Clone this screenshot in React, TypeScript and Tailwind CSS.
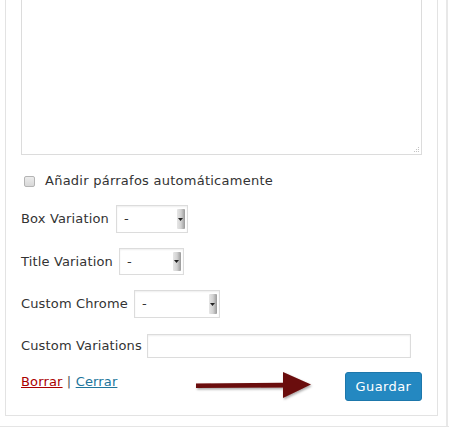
function FakeSelect({ width }: { width: string }) {
  return (
    <div className={`${width} h-full flex items-stretch border border-[#dcdcdc] bg-white shadow-[inset_0_1px_2px_rgba(0,0,0,0.07)]`}>
      <span className="flex-1 pl-[7px] flex items-center text-[13px] text-[#333]">-</span>
      <div className="my-[3px] mr-[2px] w-[8px] rounded-[1px] bg-gradient-to-r from-[#e6e6e6] via-[#d2d2d2] to-[#9a9a9a] flex items-center justify-center">
        <svg width="5" height="3" viewBox="0 0 5 3">
          <path d="M0 0 L5 0 L2.5 3 Z" fill="#222" />
        </svg>
      </div>
    </div>
  );
}

function App() {
  return (
    <div className="w-[449px] h-[427px] bg-white overflow-hidden relative" style={{ fontFamily: '"DejaVu Sans", Verdana, sans-serif' }}>
      <div className="flex h-[426px]">
        <div className="ml-[5px] w-[433px] h-[416px] border border-t-0 border-[#e3e3e3] pl-[15px] text-[13px] text-[#333] tracking-[0.15px]">
          {/* textarea */}
          <div className="w-[401px] h-[155px] border border-t-0 border-[#dcdcdc] relative">
            <svg className="absolute right-[1px] bottom-[1px]" width="8" height="8" viewBox="0 0 8 8">
              <circle cx="6.5" cy="2.5" r="0.6" fill="#bbb" />
              <circle cx="4.5" cy="4.5" r="0.6" fill="#bbb" />
              <circle cx="6.5" cy="4.5" r="0.6" fill="#bbb" />
              <circle cx="2.5" cy="6.5" r="0.6" fill="#bbb" />
              <circle cx="4.5" cy="6.5" r="0.6" fill="#bbb" />
              <circle cx="6.5" cy="6.5" r="0.6" fill="#bbb" />
            </svg>
          </div>

          <div className="mt-[17px] h-[18px] flex items-center">
            <div className="ml-[3px] w-[11px] h-[11px] rounded-[2px] border border-[#b4b4b4] bg-gradient-to-b from-[#ececec] to-[#d8d8d8]" />
            <span className="ml-[10px] tracking-[0.25px]">Añadir párrafos automáticamente</span>
          </div>

          <div className="mt-[15px] h-[28px] flex items-center gap-[7px]">
            <span>Box Variation</span>
            <FakeSelect width="w-[72px]" />
          </div>

          <div className="mt-[15px] h-[27px] flex items-center gap-[6px]">
            <span>Title Variation</span>
            <FakeSelect width="w-[65px]" />
          </div>

          <div className="mt-[15px] h-[28px] flex items-center gap-[6px]">
            <span>Custom Chrome</span>
            <FakeSelect width="w-[86px]" />
          </div>

          <div className="mt-[16px] h-[24px] flex items-center gap-[5px]">
            <span>Custom Variations</span>
            <div className="w-[264px] h-full border border-[#dcdcdc] bg-white shadow-[inset_0_1px_2px_rgba(0,0,0,0.07)]" />
          </div>

          <div className="mt-[14px] h-[29px] flex items-start justify-between pr-[15px] relative">
            <div className="pt-[1px] leading-[18px]">
              <a className="text-[#a00] underline">Borrar</a>
              <span className="text-[#555]"> | </span>
              <a className="text-[#21759b] underline">Cerrar</a>
            </div>
            <svg className="absolute left-[172px] top-[-3px]" width="124" height="34" viewBox="0 0 124 34">
              <defs>
                <filter id="sh" x="-10%" y="-30%" width="120%" height="160%">
                  <feDropShadow dx="1" dy="1.5" stdDeviation="1.2" floodColor="#000" floodOpacity="0.35" />
                </filter>
              </defs>
              <path d="M3 14.5 L90 13.8 L90 3 L118 15.5 L90 29 L90 18.5 L3 19 Z" fill="#6b0b0b" filter="url(#sh)" />
            </svg>
            <button className="w-[77px] h-[29px] rounded-[3px] bg-[#2488c1] border border-[#1d77ab] text-white text-[13px] tracking-[0.4px]">
              Guardar
            </button>
          </div>
        </div>
        <div className="ml-[8px] w-[2px] h-full bg-[#e8e8e8]" />
      </div>
      <div className="h-[1px] bg-[#e5e5e5]" />
    </div>
  );
}

export default App;
